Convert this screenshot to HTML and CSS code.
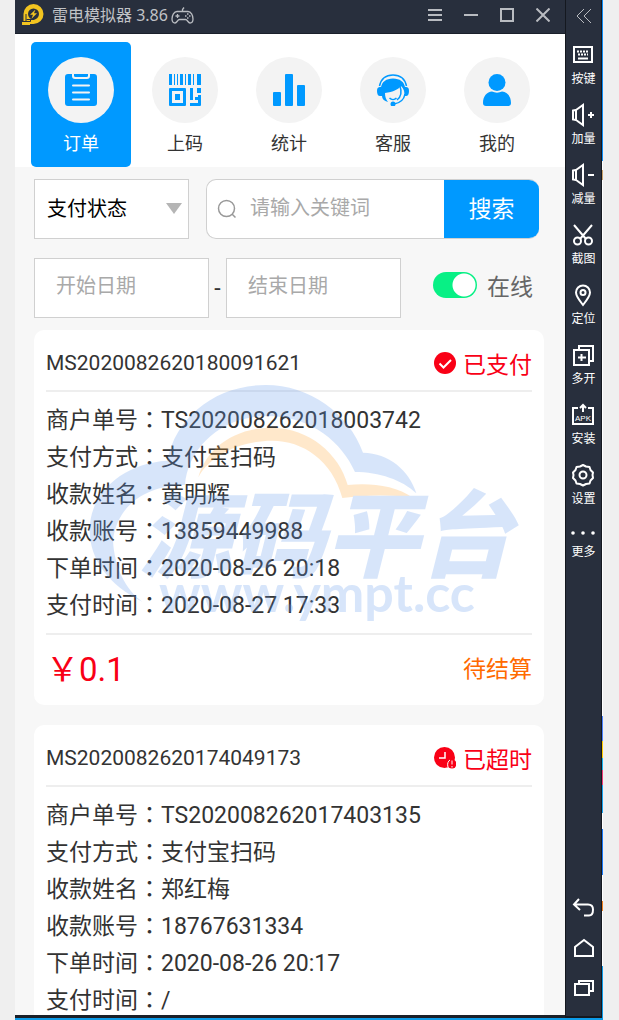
FILE: index.html
```html
<!DOCTYPE html>
<html lang="zh-CN">
<head>
    <meta charset="UTF-8">
    <meta name="viewport" content="width=device-width, initial-scale=1.0">
    <title>雷电模拟器</title>
    <link rel="stylesheet" href="styles.css">
</head>
<body>
    <div class="window">
        <div class="main">
            <header class="titlebar">
                <svg class="logo" viewBox="0 0 22 22">
                    <path d="M11.500 0a10 10 0 0 1 0 20H8v1H0v-4h1.500V10a10 10 0 0 1 10-10z" fill="#f2c420"/>
                    <circle cx="11.500" cy="10" r="5.500" fill="#282f3d"/>
                    <path d="M4 17V10M0 17.500h8.500V15M4.500 15.500h8" fill="none" stroke="#282f3d" stroke-width="1"/>
                    <path d="M13.500 5.500L8 10.800h3l-1.500 4L15 9.300h-3z" fill="#f2c420"/>
                </svg>
                <span class="title">雷电模拟器 3.86</span>
                <svg class="gamepad" viewBox="0 0 23 17" fill="none" stroke="#b9bcc1" stroke-width="1.300">
                    <path d="M6 4.500h11c3 0 5 4 5 7.500 0 3-1.500 4-3 4-2 0-2.500-3.500-4.500-3.500h-6C6.500 12.500 6 16 4 16c-1.500 0-3-1-3-4C1 8.500 3 4.500 6 4.500zM11.500 4.500V2.500l1.500-2M6.500 7v4M4.500 9h4"/>
                    <path d="M14 9h1.500M18 9h1.500M16 7h1.500M16 11h1.500"/>
                </svg>
                <div class="controls">
                    <button aria-label="菜单"><svg viewBox="0 0 14 14"><path d="M0 2h14M0 7h14M0 12h14"/></svg></button>
                    <button aria-label="最小化"><svg viewBox="0 0 14 14"><path d="M0 7h14"/></svg></button>
                    <button aria-label="最大化"><svg viewBox="0 0 14 14"><path d="M1 1h12v12H1z"/></svg></button>
                    <button aria-label="关闭"><svg viewBox="0 0 14 14"><path d="M.5.5l13 13M13.500.5l-13 13"/></svg></button>
                </div>
            </header>

            <div class="screen">
                <nav class="tabs">
                    <a href="#" class="tab active">
                        <span class="circle"><svg viewBox="0 0 32 32">
                            <path fill="#0099ff" d="M3 0h4v2a3 3 0 0 0 3 3h12a3 3 0 0 0 3-3V0h4a3 3 0 0 1 3 3v26a3 3 0 0 1-3 3H3a3 3 0 0 1-3-3V3a3 3 0 0 1 3-3z"/>
                            <path fill="#0099ff" d="M9 0h14v1.500a1.500 1.500 0 0 1-1.500 1.500h-11A1.500 1.500 0 0 1 9 1.500z"/>
                            <path stroke="#f3f3f3" stroke-width="2" stroke-linecap="round" d="M8 11.500h16M8 18.500h16M8 25.500h16"/>
                        </svg></span>
                        订单
                    </a>
                    <a href="#" class="tab">
                        <span class="circle"><svg viewBox="0 0 32 32" fill="#0099ff">
                            <path d="M0 0h3v11H0zM5 0h1v11H5zM8 0h1v11H8zM11 0h3v11h-3zM16 0h1v11h-1zM19 0h3v11h-3zM24 0h1v11h-1zM28 0h4v11h-4z"/>
                            <path fill-rule="evenodd" d="M1 14h15a1 1 0 0 1 1 1v16a1 1 0 0 1-1 1H1a1 1 0 0 1-1-1V15a1 1 0 0 1 1-1zM3 17v12h11V17z"/>
                            <path d="M6 20h5v6H6zM21 14h3v12h-3zM28 14h4v5h-4zM29 21h3v10a1 1 0 0 1-1 1H21v-3h8zM26 23h3v3h-3z"/>
                        </svg></span>
                        上码
                    </a>
                    <a href="#" class="tab">
                        <span class="circle"><svg viewBox="0 0 32 32" fill="#0099ff">
                            <rect x="0" y="18" width="8" height="14" rx="1"/>
                            <rect x="12" y="0" width="8" height="32" rx="1"/>
                            <rect x="24" y="11" width="8" height="21" rx="1"/>
                        </svg></span>
                        统计
                    </a>
                    <a href="#" class="tab">
                        <span class="circle"><svg viewBox="0 0 32 32" fill="#0099ff">
                            <path fill="none" stroke="#0099ff" stroke-width="1.500" d="M2.500 12C4 5 9 1 16 1s12 4 13.500 11M28 20c-1 6-5 9-11 10"/>
                            <path d="M5 22H3c-2 0-3-2-3-5s1-4 3-4h1C5 8 9 4.500 16 4.500S27 8 28 13h1c2 0 3 1 3 4s-1 5-3 5h-2c1-4 0-7-3-10-2 3-8 6-16 7 0 4 1 6 3 9-4-1-6-3-6-6z"/>
                            <path fill="none" stroke="#0099ff" stroke-width="1.500" d="M12.500 24c2 2 5 2 7 0M23 12c2 6 1 11-3 14"/>
                            <circle cx="16" cy="30" r="2.500"/>
                        </svg></span>
                        客服
                    </a>
                    <a href="#" class="tab">
                        <span class="circle"><svg viewBox="0 0 32 32" fill="#0099ff">
                            <circle cx="16" cy="8.500" r="8.500"/>
                            <path d="M2 29c0-7 4-11 9-11.500 3 1.500 7 1.500 10 0 5 .5 9 4.500 9 11.500 0 2-1 3-3 3H5c-2 0-3-1-3-3z"/>
                        </svg></span>
                        我的
                    </a>
                </nav>

                <form class="filters">
                    <div class="row">
                        <div class="select">
                            <select aria-label="支付状态">
                                <option>支付状态</option>
                                <option>已支付</option>
                                <option>已超时</option>
                            </select>
                        </div>
                        <div class="search">
                            <svg viewBox="0 0 20 20" fill="none" stroke="#999" stroke-width="1.500"><circle cx="9.500" cy="9.500" r="8"/><path d="M15 15l3.500 3.500"/></svg>
                            <input type="text" placeholder="请输入关键词" aria-label="关键词">
                            <button type="button">搜索</button>
                        </div>
                    </div>
                    <div class="row">
                        <div class="dates">
                            <input type="text" placeholder="开始日期" aria-label="开始日期">
                            <span>-</span>
                            <input type="text" placeholder="结束日期" aria-label="结束日期">
                        </div>
                        <label class="online"><input type="checkbox" checked>在线</label>
                    </div>
                </form>

                <section class="card">
                    <div class="card-head">
                        <span class="order-no">MS2020082620180091621</span>
                        <span class="status">
                            <svg viewBox="0 0 22 22"><circle cx="11" cy="11" r="11" fill="#f90016"/><path d="M5.500 11.500l4 4 7.500-7.500" fill="none" stroke="#fff" stroke-width="2"/></svg>
                            已支付
                        </span>
                    </div>
                    <ul class="info">
                        <li>商户单号<span class="colon" lang="zh-TW">：</span>TS202008262018003742</li>
                        <li>支付方式<span class="colon" lang="zh-TW">：</span>支付宝扫码</li>
                        <li>收款姓名<span class="colon" lang="zh-TW">：</span>黄明辉</li>
                        <li>收款账号<span class="colon" lang="zh-TW">：</span>13859449988</li>
                        <li>下单时间<span class="colon" lang="zh-TW">：</span>2020-08-26 20:18</li>
                        <li>支付时间<span class="colon" lang="zh-TW">：</span>2020-08-27 17:33</li>
                    </ul>
                    <div class="card-foot">
                        <span class="price">￥0.1</span>
                        <span class="settle">待结算</span>
                    </div>
                </section>

                <section class="card">
                    <div class="card-head">
                        <span class="order-no">MS2020082620174049173</span>
                        <span class="status">
                            <svg viewBox="0 0 22 22"><circle cx="10.500" cy="10.500" r="10.500" fill="#f90016"/><path d="M11 5v6H5" fill="none" stroke="#fff" stroke-width="1.500"/><circle cx="18" cy="17" r="4.500" fill="#f90016"/><path d="M18 13.500v4M18 19v1.500M14 20c-1-3 0-6 2-7" fill="none" stroke="#fff"/></svg>
                            已超时
                        </span>
                    </div>
                    <ul class="info">
                        <li>商户单号<span class="colon" lang="zh-TW">：</span>TS202008262017403135</li>
                        <li>支付方式<span class="colon" lang="zh-TW">：</span>支付宝扫码</li>
                        <li>收款姓名<span class="colon" lang="zh-TW">：</span>郑红梅</li>
                        <li>收款账号<span class="colon" lang="zh-TW">：</span>18767631334</li>
                        <li>下单时间<span class="colon" lang="zh-TW">：</span>2020-08-26 20:17</li>
                        <li>支付时间<span class="colon" lang="zh-TW">：</span>/</li>
                    </ul>
                </section>

                <!-- watermark -->
                <svg class="watermark" viewBox="0 0 1440 810" fill="#639bef">
                    <path d="M250 695C150 645 92 570 92 480C92 370 190 280 325 272C350 140 470 45 620 45C750 45 870 130 912 248C990 250 1050 300 1072 370C1030 330 960 306 888 306C850 220 760 138 625 138C480 138 385 240 378 345C270 345 175 400 162 510C165 590 200 660 250 695z"/>
                    <path fill="#ffa733" d="M418 322C440 240 520 173 640 173C750 175 840 250 866 345C930 338 1010 345 1062 384C1000 373 920 375 850 384C820 270 730 212 640 212C540 212 450 260 418 322z"/>
                    <text class="wm-name" x="240" y="600">源码平台</text>
                    <text class="wm-url" x="300" y="725">www.ympt.cc</text>
                </svg>
            </div>
        </div>

        <aside class="sidebar">
            <button class="collapse" aria-label="收起"><svg viewBox="0 0 16 16"><path d="M8 1L1 8l7 7M15 1L8 8l7 7"/></svg></button>
            <div class="tools">
                <button><svg viewBox="0 0 24 24"><path d="M3 4h18v15H3z"/><path d="M6 8.500h12M7 11.500h10" stroke-dasharray="2 1"/><path d="M7 15.500h10"/></svg>按键</button>
                <button><svg viewBox="0 0 24 24"><path d="M2 7.500L5 7v10l-3-.5zM5 7l7-5v20l-7-5"/><path d="M17 12h6M20 9v6" stroke-width="2"/></svg>加量</button>
                <button><svg viewBox="0 0 24 24"><path d="M2 7.500L5 7v10l-3-.5zM5 7l7-5v20l-7-5"/><path d="M17 12h6" stroke-width="2"/></svg>减量</button>
                <button><svg viewBox="0 0 24 24"><path d="M3 2l12 14M21 2L9 16" stroke-width="2"/><circle cx="6.500" cy="18" r="3.500"/><circle cx="17.500" cy="18" r="3.500"/></svg>截图</button>
                <button><svg viewBox="0 0 24 24"><path d="M12 22C8 17 5 13 5 9.500a7 7 0 0 1 14 0C19 13 16 17 12 22z"/><circle cx="12" cy="9.500" r="2.500"/></svg>定位</button>
                <button><svg viewBox="0 0 24 24"><path d="M3 7h15v15H3zM8 7V3h14v15h-4"/><path d="M7 14.500h8M10.500 11v7" stroke-width="2"/></svg>多开</button>
                <button><svg viewBox="0 0 24 24"><path d="M7 5H2v16h20V5h-5M12 9V2M9 5l3-3 3 3"/><text x="4" y="18">APK</text></svg>安装</button>
                <button><svg viewBox="0 0 24 24"><path d="M12 2l3 1.500L18.500 4l1 3 2.500 2.500-.5 2.500.5 3-2.500 2.500-1 3-3.500.5-3 1.500-3-1.500-3.500-.5-1-3L2 15l.5-3L2 9.500 4.500 7l1-3L9 3.500z" stroke-linejoin="round"/><circle cx="12" cy="12" r="3.500"/></svg>设置</button>
                <button class="more"><svg viewBox="0 0 24 20"><g fill="#fff" stroke="none"><circle cx="2" cy="10" r="1.800"/><circle cx="12" cy="10" r="1.800"/><circle cx="22" cy="10" r="1.800"/></g></svg>更多</button>
            </div>
            <div class="keys">
                <button aria-label="返回"><svg viewBox="0 0 24 24"><path d="M7 3L2 8.500 8 14M2 8.500h14c4 0 5 2 5 5s-1 6-4 6h-5" stroke-width="2"/></svg></button>
                <button aria-label="主页"><svg viewBox="0 0 24 24"><path d="M3 20V11l9-7 9 7v9z" stroke-width="2"/></svg></button>
                <button aria-label="最近任务"><svg viewBox="0 0 24 24"><path d="M3 8h14v11H3zM7 8V5h14v10h-4" stroke-width="2"/></svg></button>
            </div>
        </aside>
        <div class="desktop-edge"></div>
    </div>
</body>
</html>
```

FILE: styles.css
```css
* {
    box-sizing: border-box;
}
body {
    margin: 0;
    padding: 0 16px 0 15px;
    background-color: #efefef;
    font-family: Roboto, "Noto Sans CJK SC", sans-serif;
    color: #333;
}
button {
    border: none;
    background: none;
    padding: 0;
    font-family: inherit;
    cursor: pointer;
}
.window {
    display: grid;
    grid-template-columns: 1fr 37px 1px;
    height: 100vh;
    border-bottom: 2px solid #0c9be8;
}
.main {
    display: flex;
    flex-direction: column;
    min-width: 0;
    min-height: 0;
    border-bottom: 3px solid #1b2028;
}

/* title bar */
.titlebar {
    display: flex;
    align-items: center;
    flex-shrink: 0;
    height: 34px;
    padding: 0 4px 3px 7px;
    background-color: #282f3d;
    border-bottom: 1px solid #1a202b;
}
.logo {
    width: 22px;
    height: 22px;
    margin-right: 8px;
}
.title {
    font-family: "Noto Sans", "Noto Sans CJK SC", sans-serif;
    font-size: 16px;
    line-height: 24px;
    color: #c0c2c6;
}
.gamepad {
    width: 23px;
    height: 17px;
    margin-left: 3px;
}
.controls {
    display: flex;
    margin-left: auto;
}
.controls button {
    display: flex;
    justify-content: center;
    align-items: center;
    width: 36px;
    height: 24px;
}
.controls svg {
    width: 14px;
    height: 14px;
    fill: none;
    stroke: #b9bcc1;
    stroke-width: 2;
}

/* phone screen */
.screen {
    position: relative;
    flex: 1;
    min-height: 0;
    overflow: hidden;
    background-color: #f7f7f7;
}
.tabs {
    display: grid;
    grid-template-columns: repeat(5, 1fr);
    gap: 4px;
    padding: 8px 18px 0 16px;
    background-color: #fff;
}
.tab {
    display: flex;
    flex-direction: column;
    align-items: center;
    gap: 8px;
    padding: 15px 0 10px;
    border-radius: 5px;
    font-size: 18px;
    line-height: 26px;
    color: #333;
    text-decoration: none;
}
.tab.active {
    background-color: #0099ff;
    color: #fff;
}
.circle {
    display: flex;
    justify-content: center;
    align-items: center;
    width: 66px;
    height: 66px;
    border-radius: 50%;
    background-color: #f3f3f3;
}
.circle svg {
    width: 32px;
    height: 32px;
}

/* filters */
.filters {
    display: flex;
    flex-direction: column;
    gap: 19px;
    padding: 12px 26px 12px 19px;
}
.row {
    display: flex;
    align-items: center;
    justify-content: space-between;
    gap: 17px;
    height: 60px;
}
.select {
    position: relative;
    width: 155px;
    height: 60px;
}
.select::after {
    content: "";
    position: absolute;
    right: 7px;
    top: 24px;
    border: 8px solid transparent;
    border-top: 11px solid #b5b5b5;
    border-bottom: none;
    pointer-events: none;
}
.select select {
    appearance: none;
    width: 100%;
    height: 100%;
    padding: 0 12px;
    border: 1px solid #d0d0d0;
    border-radius: 0;
    background-color: #fff;
    font-family: inherit;
    font-size: 20px;
    color: #000;
}
.search {
    display: flex;
    align-items: center;
    flex: 1;
    min-width: 0;
    height: 60px;
    padding-left: 10px;
    border: 1px solid #d0d0d0;
    border-right: none;
    border-radius: 10px;
    background-color: #fff;
    overflow: hidden;
}
.search svg {
    flex-shrink: 0;
    width: 20px;
    height: 20px;
}
.search input {
    flex: 1;
    min-width: 0;
    padding: 0 0 2px 13px;
    border: none;
    font-family: inherit;
    font-size: 20px;
}
.search button {
    width: 95px;
    height: 60px;
    padding-bottom: 4px;
    background-color: #0099ff;
    font-size: 23px;
    color: #fff;
}
input::placeholder {
    color: #a9a9a9;
}
.dates {
    display: flex;
    align-items: center;
    flex: 1;
    max-width: 367px;
}
.dates input {
    flex: 1;
    min-width: 0;
    height: 60px;
    padding: 0 21px 4px;
    border: 1px solid #d0d0d0;
    background-color: #fff;
    font-family: inherit;
    font-size: 20px;
}
.dates span {
    width: 17px;
    font-size: 23px;
    text-align: center;
}
.online {
    display: flex;
    align-items: center;
    gap: 10px;
    padding: 0 6px 6px 0;
    font-size: 23px;
    color: #666;
}
.online input {
    appearance: none;
    width: 44px;
    height: 26px;
    margin: 0;
    border-radius: 13px;
    background: radial-gradient(circle at 31px 13px, #fff 11px, #08f085 12px);
}

/* order cards */
.card {
    margin: 0 21px 20px 19px;
    padding: 0 12px;
    border-radius: 10px;
    background-color: #fff;
}
.card-head {
    display: flex;
    justify-content: space-between;
    align-items: center;
    height: 62px;
    padding-top: 6px;
    border-bottom: 2px solid #eee;
}
.order-no {
    font-size: 21px;
}
.status {
    display: flex;
    align-items: center;
    gap: 7px;
    font-size: 23px;
    color: #f90016;
}
.status svg {
    width: 22px;
    height: 22px;
}
.info {
    margin: 0;
    padding: 10px 0 9px;
    list-style: none;
    font-size: 23px;
    line-height: 37px;
}
.colon {
    font-family: "Noto Sans CJK TC", sans-serif;
    line-height: 1;
}
.card-foot {
    display: flex;
    justify-content: space-between;
    align-items: center;
    height: 72px;
    padding-bottom: 6px;
    border-top: 2px solid #eee;
}
.price {
    font-size: 33px;
    color: #f90016;
}
.settle {
    font-size: 23px;
    color: #ff6a00;
}

.watermark {
    position: absolute;
    left: 44px;
    top: 336px;
    width: 480px;
    height: 270px;
    opacity: 0.25;
    pointer-events: none;
}
.wm-name {
    font-family: "Noto Sans CJK SC", sans-serif;
    font-size: 280px;
    font-weight: 900;
    font-style: italic;
}
.wm-url {
    font-family: Lato, sans-serif;
    font-size: 156px;
    font-weight: 700;
}

/* emulator side bar */
.sidebar {
    display: flex;
    flex-direction: column;
    align-items: center;
    background-color: #282f3d;
    border: solid #14181f;
    border-width: 0 1px 2px;
}
.sidebar svg {
    display: block;
    width: 24px;
    height: 24px;
    fill: none;
    stroke: #fff;
    stroke-width: 2;
}
.sidebar .collapse svg {
    width: 16px;
    height: 16px;
    margin: 8px 0 19px;
    stroke: #b9bcc1;
    stroke-width: 1;
}
.tools button {
    display: flex;
    flex-direction: column;
    align-items: center;
    gap: 3px;
    height: 60px;
    font-size: 12px;
    line-height: 18px;
    color: #fff;
}
.tools text {
    font-family: "Liberation Sans", sans-serif;
    font-size: 8px;
    fill: #fff;
    stroke: none;
}
.tools .more {
    gap: 0;
}
.tools .more svg {
    height: 20px;
}
.keys {
    display: flex;
    flex-direction: column;
    gap: 16px;
    margin-top: auto;
    padding-bottom: 16px;
}

/* strip of the desktop left visible beside the window */
.desktop-edge {
    background: linear-gradient(#0c8cf5 161px, #fff 161px, #fff 170px, #c9a26a 170px, #c9a26a 180px, #fff 180px, #fff 716px, #4a82ff 716px, #4a82ff 741px, #ffcc00 741px, #ffcc00 758px, #18b4f0 758px, #18b4f0 770px, #f03c78 770px, #f03c78 785px, #18a4f0 785px, #18a4f0 813px, #fff 813px, #fff 829px, #1878f8 829px, #1878f8 875px, #fff 875px, #fff 901px, #f08020 901px, #f08020 911px, #fff 911px, #fff 966px, #0c9be8 966px);
}
```
